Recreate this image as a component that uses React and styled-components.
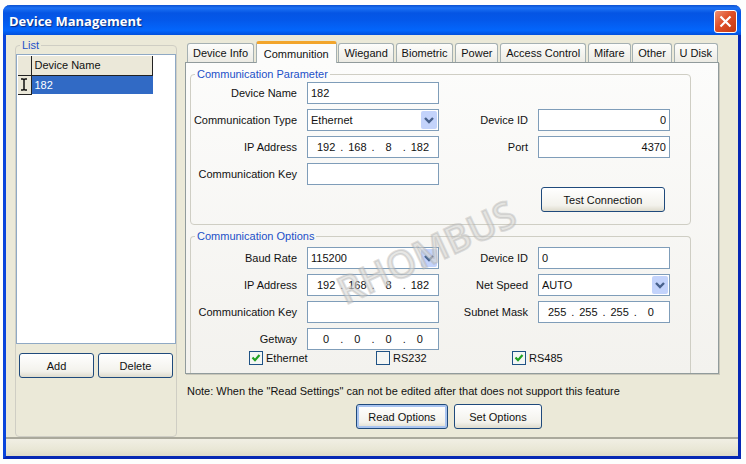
import React, { useState } from 'react';
import styled, { createGlobalStyle } from 'styled-components';

const GlobalStyle = createGlobalStyle`
* {
    box-sizing: border-box;
}
body {
    margin: 0;
    background: #fdfefd;
    font-family: "Liberation Sans", Arial, sans-serif;
    font-size: 11px;
    line-height: 14px;
    color: #111111;
}
button, input, select {
    font: inherit;
    color: inherit;
    margin: 0;
}
`;

const Window = styled.main`
position: relative;
margin: 5px 5px 5px 3px;
border: 3px solid #0a45dc;
border-top: 0;
border-right-color: #0527b4;
border-bottom-color: #0527b4;
border-radius: 7px 7px 0 0;
background: #ebe9d8;
`;

const TitleBar = styled.header`
display: flex;
align-items: center;
justify-content: space-between;
height: 30px;
margin: 0 -3px;
padding: 2px 4px 0 6px;
border-radius: 7px 7px 0 0;
background: linear-gradient(#0a50d0 0, #1c72f4 3px, #0555e4 8px, #0458ea 50%, #0366fc 85%, #0250dc 100%);
`;

const Title = styled.h1`
margin: 0;
font-family: "Open Sans", sans-serif;
font-size: 13px;
font-weight: 700;
color: #ffffff;
text-shadow: 1px 1px 1px #0a2a80;
`;

const CloseButton = styled.button`
display: flex;
align-items: center;
justify-content: center;
width: 23px;
height: 23px;
padding: 0;
border: 1px solid #ffffff;
border-radius: 3px;
background: linear-gradient(135deg, #ee9175, #df4f28 45%, #c23a12);
`;

const Body = styled.div`
display: flex;
align-items: stretch;
gap: 8px;
padding: 4px 19px 0 9px;
`;

const Group = styled.fieldset`
min-width: 0;
margin: ${(props) => props.$top || 0}px 0 0;
padding: ${(props) => props.$pad || '0'};
border: 1px solid #cfcec4;
border-bottom-width: ${(props) => (props.$open ? 0 : 1)}px;
border-radius: ${(props) => (props.$open ? '4px 4px 0 0' : '4px')};
`;

const Legend = styled.legend`
height: 12px;
margin-left: 4px;
padding: 0 2px;
line-height: 12px;
color: #1c50c8;
`;

const Sidebar = styled(Group)`
flex: 0 0 162px;
display: flex;
flex-direction: column;
`;

const ListBox = styled.div`
height: 290px;
margin: 3px 0 9px;
padding: 1px;
border: 1px solid #8fa9c4;
background: #ffffff;
`;

const ListTable = styled.table`
border-collapse: collapse;
width: 135px;
table-layout: fixed;
`;

const HeadCell = styled.th`
width: ${(props) => props.$width || 'auto'};
height: 19px;
padding: 0 3px;
border-right: 1px solid #222222;
border-bottom: 1px solid #222222;
background: #ebe8d9;
font-weight: 400;
text-align: left;
`;

const ListCell = styled.td`
height: 19px;
padding: 0 3px;
background: #316ac5;
color: #ffffff;
`;

const MarkerCell = styled.td`
padding: 0;
border-right: 1px solid #222222;
border-bottom: 1px solid #222222;
background: #ebe8d9;
text-align: center;

svg {
    display: block;
    margin: 0 auto;
}
`;

const ButtonRow = styled.div`
display: flex;
justify-content: ${(props) => props.$justify || 'flex-start'};
gap: ${(props) => props.$gap || 4}px;
padding: ${(props) => props.$pad || '0'};
`;

const Button = styled.button`
flex: ${(props) => (props.$width ? 'none' : 1)};
width: ${(props) => (props.$width ? `${props.$width}px` : 'auto')};
height: 25px;
padding: 0;
border: 1px solid #1f4a7c;
border-radius: 3px;
background: linear-gradient(#ffffff, #f3f2ec 75%, #dedbcd);
box-shadow: ${(props) => (props.$active ? 'inset 0 0 0 2px #a9c4f0' : 'none')};
`;

const Content = styled.section`
flex: 1;
min-width: 0;
display: flex;
flex-direction: column;
`;

const Tabs = styled.div`
display: flex;
align-items: flex-end;
justify-content: space-between;
height: 23px;
padding: 0 1px 0 2px;
`;

const Tab = styled.button`
height: ${(props) => (props.$active ? 22 : 19)}px;
padding: 0 ${(props) => (props.$active ? 7 : 5)}px;
border: 1px solid #a5b0b2;
border-top: ${(props) => (props.$active ? '3px solid #f2a52c' : '1px solid #a5b0b2')};
border-bottom: 0;
border-radius: 3px 3px 0 0;
background: ${(props) => (props.$active ? '#fcfcfb' : 'linear-gradient(#fdfdfb, #ecebe4)')};
margin-bottom: ${(props) => (props.$active ? -1 : 0)}px;
z-index: ${(props) => (props.$active ? 1 : 0)};
white-space: nowrap;
`;

const Panel = styled.div`
position: relative;
padding: 5px 27px 0 4px;
border: 1px solid #919b9c;
box-shadow: 1px 1px 0 #c9c7ba;
background: linear-gradient(#fcfcfb, #f3f2ee);
`;

const Fields = styled.div`
display: grid;
grid-template-columns: 106px minmax(80px, 132fr) 79px minmax(80px, 132fr);
grid-auto-rows: 22px;
gap: 5px 10px;
align-items: center;
padding-right: 20px;
`;

const Label = styled.label`
display: flex;
justify-content: flex-end;
grid-column: ${(props) => props.$col};
grid-row: ${(props) => props.$row};
white-space: nowrap;
`;

const Slot = styled.div`
position: relative;
grid-column: ${(props) => props.$col};
grid-row: ${(props) => props.$row};
height: 22px;

svg {
    position: absolute;
    top: 2px;
    right: 2px;
    pointer-events: none;
}
`;

const TextInput = styled.input`
display: block;
width: 100%;
height: 22px;
padding: 0 3px;
border: 1px solid #7f9db9;
border-radius: 0;
background: #ffffff;
text-align: ${(props) => props.$align || 'left'};
`;

const Select = styled.select`
display: block;
width: 100%;
height: 22px;
padding: 0 20px 0 3px;
border: 1px solid #7f9db9;
border-radius: 0;
background: #ffffff;
appearance: none;
`;

const IpBox = styled.div`
display: flex;
align-items: center;
height: 22px;
padding: 0 4px;
border: 1px solid #7f9db9;
background: #ffffff;
`;

const IpPart = styled.input`
flex: 1;
min-width: 0;
width: 0;
height: 18px;
padding: 0;
border: 0;
background: transparent;
text-align: center;
`;

const Checks = styled.div`
display: grid;
grid-template-columns: 127px 136px 1fr;
padding: 1px 0 0 58px;
`;

const CheckLabel = styled.label`
display: flex;
align-items: center;
gap: 3px;
`;

const CheckBox = styled.input`
appearance: none;
width: 14px;
height: 14px;
border: 1px solid #1f5285;
background: #f4f6f4;
`;

const CheckWrap = styled.span`
position: relative;
display: flex;

svg {
    position: absolute;
    top: 2px;
    left: 2px;
    pointer-events: none;
}
`;

const Note = styled.p`
margin: 10px 0 6px 2px;
`;

const StatusBar = styled.footer`
height: 19px;
border-top: 2px solid #aaa99c;
background: linear-gradient(#f1efe4, #e9e7d6 60%, #dcd9c8);
`;

const Watermark = styled.div`
position: absolute;
top: 168px;
left: 144px;
font-family: "Open Sans", sans-serif;
font-size: 38px;
font-weight: 600;
line-height: 40px;
color: rgba(215, 215, 212, 0.6);
-webkit-text-stroke: 2px rgba(165, 165, 165, 0.35);
transform: rotate(-25deg);
pointer-events: none;
`;

const tabs = ['Device Info', 'Communition', 'Wiegand', 'Biometric', 'Power', 'Access Control', 'Mifare', 'Other', 'U Disk'];

const Field = ({ id, label, side = 'left', row, children }) => {
    const col = side === 'left' ? 1 : 3;
    return (
        <>
            <Label htmlFor={id} $col={col} $row={row}>{label}</Label>
            <Slot $col={col + 1} $row={row}>{children}</Slot>
        </>
    )
}

const DropDown = ({ id, options }) => (
    <>
        <Select id={id}>
            {options.map(option => <option key={option}>{option}</option>)}
        </Select>
        <svg width="16" height="18" viewBox="0 0 16 18">
            <rect width="16" height="18" rx="2" fill="#c3d3fb" />
            <path d="M4 7l4 4 4-4" fill="none" stroke="#48618c" strokeWidth="2.4" />
        </svg>
    </>
)

const IpAddress = ({ id, label, value }) => (
    <IpBox role="group" aria-label={label}>
        {value.split('.').map((part, i) => (
            <React.Fragment key={i}>
                {i > 0 && <span>.</span>}
                <IpPart id={i === 0 ? id : undefined} aria-label={`${label} ${i + 1}`} defaultValue={part} />
            </React.Fragment>
        ))}
    </IpBox>
)

const Check = ({ label, initial }) => {
    const [checked, setChecked] = useState(initial);
    return (
        <CheckLabel>
            <CheckWrap>
                <CheckBox type="checkbox" checked={checked} onChange={(e) => setChecked(e.target.checked)} />
                {checked && <svg width="10" height="10" viewBox="0 0 10 10">
                    <path d="M1.5 4.5L4 7.2 8.5 2" fill="none" stroke="#21a121" strokeWidth="2.2" />
                </svg>}
            </CheckWrap>
            {label}
        </CheckLabel>
    )
}

const App = () => {
    const [active, setActive] = useState('Communition');

    return (
        <>
            <GlobalStyle />
            <Window>
                <TitleBar>
                    <Title>Device Management</Title>
                    <CloseButton aria-label="Close">
                        <svg width="13" height="13" viewBox="0 0 13 13">
                            <path d="M1.5 1.5l10 10M11.5 1.5l-10 10" stroke="#ffffff" strokeWidth="2.2" />
                        </svg>
                    </CloseButton>
                </TitleBar>
                <Body>
                    <Sidebar>
                        <Legend>List</Legend>
                        <ListBox>
                            <ListTable>
                                <thead>
                                    <tr>
                                        <HeadCell $width="13px" />
                                        <HeadCell>Device Name</HeadCell>
                                    </tr>
                                </thead>
                                <tbody>
                                    <tr>
                                        <MarkerCell>
                                            <svg width="8" height="13" viewBox="0 0 8 13">
                                                <path d="M1 1h2l1 1 1-1h2M4 2v9M1 12h2l1-1 1 1h2" fill="none" stroke="#111111" strokeWidth="1.5" />
                                            </svg>
                                        </MarkerCell>
                                        <ListCell>182</ListCell>
                                    </tr>
                                </tbody>
                            </ListTable>
                        </ListBox>
                        <ButtonRow $pad="0 3px">
                            <Button>Add</Button>
                            <Button>Delete</Button>
                        </ButtonRow>
                    </Sidebar>
                    <Content>
                        <Tabs role="tablist">
                            {tabs.map(tab => (
                                <Tab key={tab} role="tab" aria-selected={tab === active} $active={tab === active} onClick={() => setActive(tab)}>
                                    {tab}
                                </Tab>
                            ))}
                        </Tabs>
                        <Panel role="tabpanel">
                            <Group $pad="2px 0 12px">
                                <Legend>Communication Parameter</Legend>
                                <Fields>
                                    <Field id="name" label="Device Name" row={1}>
                                        <TextInput id="name" defaultValue="182" />
                                    </Field>
                                    <Field id="type" label="Communication Type" row={2}>
                                        <DropDown id="type" options={['Ethernet', 'RS232', 'RS485']} />
                                    </Field>
                                    <Field id="device-id" label="Device ID" side="right" row={2}>
                                        <TextInput id="device-id" $align="right" defaultValue="0" />
                                    </Field>
                                    <Field id="ip" label="IP Address" row={3}>
                                        <IpAddress id="ip" label="IP Address" value="192.168.8.182" />
                                    </Field>
                                    <Field id="port" label="Port" side="right" row={3}>
                                        <TextInput id="port" $align="right" defaultValue="4370" />
                                    </Field>
                                    <Field id="key" label="Communication Key" row={4}>
                                        <TextInput id="key" />
                                    </Field>
                                </Fields>
                                <ButtonRow $justify="flex-end" $pad="2px 25px 0 0">
                                    <Button $width={124}>Test Connection</Button>
                                </ButtonRow>
                            </Group>
                            <Group $top={5} $pad="5px 0 8px" $open>
                                <Legend>Communication Options</Legend>
                                <Fields>
                                    <Field id="baud" label="Baud Rate" row={1}>
                                        <DropDown id="baud" options={['115200', '57600', '38400', '9600']} />
                                    </Field>
                                    <Field id="option-id" label="Device ID" side="right" row={1}>
                                        <TextInput id="option-id" defaultValue="0" />
                                    </Field>
                                    <Field id="option-ip" label="IP Address" row={2}>
                                        <IpAddress id="option-ip" label="IP Address" value="192.168.8.182" />
                                    </Field>
                                    <Field id="speed" label="Net Speed" side="right" row={2}>
                                        <DropDown id="speed" options={['AUTO', '10M', '100M']} />
                                    </Field>
                                    <Field id="option-key" label="Communication Key" row={3}>
                                        <TextInput id="option-key" />
                                    </Field>
                                    <Field id="mask" label="Subnet Mask" side="right" row={3}>
                                        <IpAddress id="mask" label="Subnet Mask" value="255.255.255.0" />
                                    </Field>
                                    <Field id="gateway" label="Getway" row={4}>
                                        <IpAddress id="gateway" label="Getway" value="0.0.0.0" />
                                    </Field>
                                </Fields>
                                <Checks>
                                    <Check label="Ethernet" initial={true} />
                                    <Check label="RS232" initial={false} />
                                    <Check label="RS485" initial={true} />
                                </Checks>
                            </Group>
                            <Watermark aria-hidden="true">RHOMBUS</Watermark>
                        </Panel>
                        <Note>Note: When the "Read Settings" can not be edited after that does not support this feature</Note>
                        <ButtonRow $gap={6} $pad="0 0 8px 171px">
                            <Button $width={92} $active>Read Options</Button>
                            <Button $width={88}>Set Options</Button>
                        </ButtonRow>
                    </Content>
                </Body>
                <StatusBar />
            </Window>
        </>
    )
}

export default App;
